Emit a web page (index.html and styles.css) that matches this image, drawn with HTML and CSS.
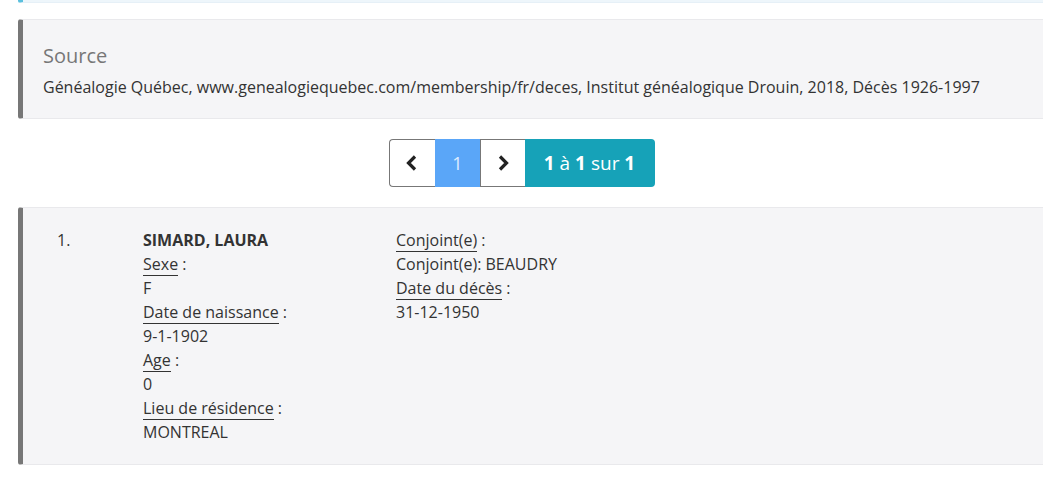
FILE: index.html
```html
<!DOCTYPE html>
<html lang="fr">
<head>
    <meta charset="UTF-8">
    <title>Décès - SIMARD, LAURA</title>
    <link rel="stylesheet" href="styles.css">
</head>
<body>
    <div class="page">
        <div class="callout callout-info prev"></div>

        <div class="callout source">
            <h4>Source</h4>
            <p>Généalogie Québec, www.genealogiequebec.com/membership/fr/deces, Institut généalogique Drouin, 2018, Décès 1926-1997</p>
        </div>

        <div class="pager">
            <a class="page-btn" href="#">
                <svg width="18" height="18" viewBox="0 0 18 18"><path d="M12 2.5 L5.5 9 L12 15.5" fill="none" stroke="#222" stroke-width="3.2"/></svg>
            </a>
            <a class="page-btn active" href="#">1</a>
            <a class="page-btn" href="#">
                <svg width="18" height="18" viewBox="0 0 18 18"><path d="M6 2.5 L12.5 9 L6 15.5" fill="none" stroke="#222" stroke-width="3.2"/></svg>
            </a>
            <span class="page-count"><b>1</b> à <b>1</b> sur <b>1</b></span>
        </div>

        <div class="callout record">
            <div class="num">1.</div>
            <div class="col col-main">
                <div class="name">SIMARD, LAURA</div>
                <div><abbr>Sexe</abbr> :</div>
                <div>F</div>
                <div><abbr>Date de naissance</abbr> :</div>
                <div>9-1-1902</div>
                <div><abbr>Age</abbr> :</div>
                <div>0</div>
                <div><abbr>Lieu de résidence</abbr> :</div>
                <div>MONTREAL</div>
            </div>
            <div class="col">
                <div><abbr>Conjoint(e)</abbr> :</div>
                <div>Conjoint(e): BEAUDRY</div>
                <div><abbr>Date du décès</abbr> :</div>
                <div>31-12-1950</div>
            </div>
        </div>
    </div>
</body>
</html>
```

FILE: styles.css
```css
body {
    margin: 0;
    font-family: "Open Sans", sans-serif;
    font-size: 16px;
    color: #333;
    background: #fff;
    overflow: hidden;
}
.page {
    padding-left: 18px;
    margin-right: -12px;
}
.callout {
    background: #f5f5f7;
    border: 1px solid #e9e9ec;
    border-left: 5px solid #777;
    border-radius: 3px;
}
.callout-info.prev {
    height: 3px;
    margin-top: -2px;
    background: #eef6fb;
    border-color: #e6f0f7;
    border-left-color: #5bc0de;
    margin-bottom: 16px;
}
.source {
    padding: 21px 20px 19px 20px;
}
.source h4 {
    margin: 0 0 4px;
    font-size: 20px;
    font-weight: 400;
    color: #777;
    line-height: 30px;
}
.source p {
    margin: 0;
    line-height: 24px;
}
.pager {
    display: flex;
    justify-content: center;
    margin: 20px 12px 20px -18px;
}
.page-btn {
    width: 44px;
    height: 46px;
    display: flex;
    align-items: center;
    justify-content: center;
    border: 1px solid #777;
    border-right: none;
    text-decoration: none;
    color: #dcecff;
    font-size: 18px;
    background: #fff;
}
.page-btn:first-child {
    width: 45px;
    border-radius: 4px 0 0 4px;
}
.page-btn.active {
    background: #5aa6f8;
    border-color: #5aa6f8;
}
.page-count {
    width: 130px;
    height: 48px;
    line-height: 48px;
    text-align: center;
    background: #16a2b8;
    color: #fff;
    font-size: 19px;
    font-weight: 500;
    border-radius: 0 4px 4px 0;
}
.record {
    display: flex;
    padding: 20px 0 20px 34px;
    line-height: 24px;
}
.num {
    width: 86px;
}
.col-main {
    width: 253px;
}
.name {
    font-weight: 700;
}
abbr {
    text-decoration: none;
    border-bottom: 1px solid #333;
}
```
